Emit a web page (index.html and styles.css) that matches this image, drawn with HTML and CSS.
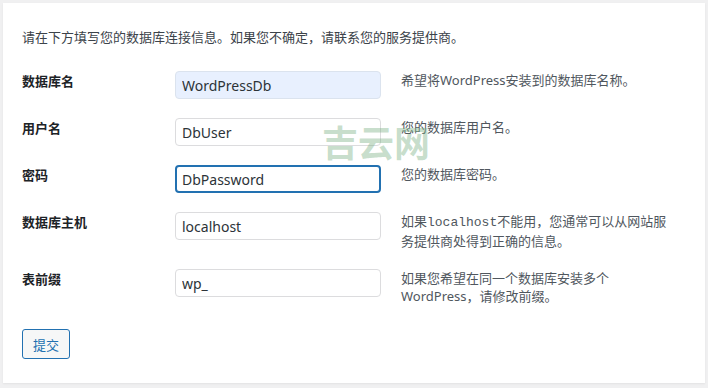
FILE: index.html
```html
<!DOCTYPE html>
<html>
<head>
  <meta charset="UTF-8">
  <title>WordPress 安装</title>
  <link rel="stylesheet" href="styles.css">
</head>
<body>
  <div class="wrap">
    <p class="intro">请在下方填写您的数据库连接信息。如果您不确定，请联系您的服务提供商。</p>

    <div class="form">
      <div class="row">
        <label class="name">数据库名</label>
        <input class="field autofill" type="text" value="WordPressDb">
        <p class="desc">希望将WordPress安装到的数据库名称。</p>
      </div>
      <div class="row">
        <label class="name">用户名</label>
        <input class="field" type="text" value="DbUser">
        <p class="desc">您的数据库用户名。</p>
      </div>
      <div class="row">
        <label class="name">密码</label>
        <input class="field focus" type="text" value="DbPassword">
        <p class="desc">您的数据库密码。</p>
      </div>
      <div class="row">
        <label class="name">数据库主机</label>
        <input class="field" type="text" value="localhost">
        <p class="desc">如果<code>localhost</code>不能用，您通常可以从网站服务提供商处得到正确的信息。</p>
      </div>
      <div class="row">
        <label class="name">表前缀</label>
        <input class="field" type="text" value="wp_">
        <p class="desc">如果您希望在同一个数据库安装多个WordPress，请修改前缀。</p>
      </div>
    </div>

    <div class="submit">
      <button class="button">提交</button>
    </div>

    <div class="mark">吉云网</div>
  </div>
</body>
</html>
```

FILE: styles.css
```css
* {
  box-sizing: border-box;
  padding: 0;
  margin: 0;
}

body {
  background: #f0f0f1;
  font-family: "Noto Sans", "Noto Sans CJK SC", sans-serif;
  font-size: 13px;
  color: #3c434a;
}

.wrap {
  position: relative;
  margin: 3px 3px 4px 3px;
  background: #fff;
  box-shadow: 0 1px 2px rgba(0, 0, 0, .06);
  padding: 25px 19px 24px 19px;
}

.intro {
  line-height: 18px;
}

.form {
  margin-top: 15px;
}

.row {
  display: grid;
  grid-template-columns: 153px 206px 1fr;
  align-items: start;
  padding: 10px 0 9px;
}

.name {
  font-weight: bold;
  line-height: 20px;
  color: #1d2327;
}

.field {
  height: 28px;
  width: 206px;
  padding: 0 6px;
  border: 1px solid #dcdcde;
  border-radius: 4px;
  background: #fff;
  font-family: "Noto Sans", sans-serif;
  font-size: 14px;
  color: #2c3338;
  outline: none;
}

.field.autofill {
  background: #e8f0fe;
  border-color: #dbe3ee;
}

.field.focus {
  border: 2px solid #2271b1;
  padding: 0 5px;
}

.desc {
  margin-left: 20px;
  max-width: 272px;
  line-height: 18px;
  color: #50575e;
}

.desc code {
  font-family: "Liberation Mono", monospace;
  font-size: 13px;
}

.submit {
  margin-top: 15px;
}

.button {
  height: 30px;
  width: 48px;
  border: 1px solid #2271b1;
  border-radius: 3px;
  background: #f6f7f7;
  color: #2271b1;
  font-family: "Noto Sans CJK SC", sans-serif;
  font-size: 13px;
}

.mark {
  position: absolute;
  left: 319px;
  top: 112px;
  font-family: "Noto Sans CJK SC", sans-serif;
  font-size: 36px;
  font-weight: bold;
  color: rgba(120, 175, 130, .42);
  pointer-events: none;
}
```
